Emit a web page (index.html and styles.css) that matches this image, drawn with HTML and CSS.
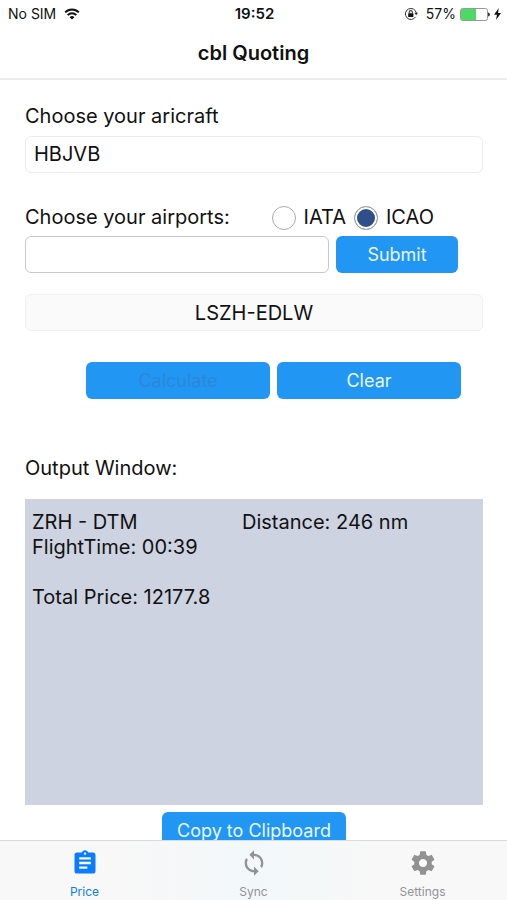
FILE: index.html
```html
<!DOCTYPE html>
<html lang="en">
<head>
<meta charset="utf-8">
<meta name="viewport" content="width=device-width, initial-scale=1">
<title>cbl Quoting</title>
<link rel="stylesheet" href="styles.css">
</head>
<body>
<div class="status">
  <div class="status-left">
    <span>No SIM</span>
    <svg width="16" height="12" viewBox="0 0 16 12" fill="none" stroke="#111" stroke-width="2"><path d="M1.2 4.4a9.6 9.6 0 0 1 13.6 0M3.7 7.1a6 6 0 0 1 8.6 0"/><path d="M8 11.6 5.6 9.2a3.4 3.4 0 0 1 4.8 0z" fill="#111" stroke="none"/></svg>
  </div>
  <time class="status-time">19:52</time>
  <div class="status-right">
    <svg class="lock" width="14" height="14" viewBox="0 0 14 14" fill="none" stroke="#333"><path d="M11.6 9.8A5.5 5.5 0 1 1 12.3 6"/><path d="M10.4 5.8h3.6l-1.8 2.5z" fill="#333" stroke="none"/><path d="M5.2 6.5V5.2a1.6 1.6 0 0 1 3.2 0v1.3" stroke-width="1.1"/><rect x="4.2" y="6.2" width="5.2" height="3.8" rx=".5" fill="#111" stroke="none"/></svg>
    <span>57%</span>
    <svg width="30" height="13" viewBox="0 0 30 13"><rect x=".5" y=".5" width="27" height="12" rx="2" fill="#fff" stroke="#999"/><path d="M2 1h14v11H2a1 1 0 0 1-1-1V2a1 1 0 0 1 1-1z" fill="#4cd964"/><path d="M28 4.5c2.500 .5 2.500 3.500 0 4z" fill="#333"/></svg>
    <svg width="7" height="12" viewBox="0 0 7 12"><path d="M4.800 0 0 6.800h3L2 12l5-7H4z" fill="#111"/></svg>
  </div>
</div>
<header class="header"><h1 class="title">cbl Quoting</h1></header>
<main class="content">
  <label class="label" for="aircraft">Choose your aricraft</label>
  <select class="field aircraft" id="aircraft"><option>HBJVB</option></select>

  <div class="airport-head">
    <label class="label" for="airport">Choose your airports:</label>
    <div class="codes">
      <label class="code"><input class="radio" type="radio" name="code">IATA</label>
      <label class="code"><input class="radio" type="radio" name="code" checked>ICAO</label>
    </div>
  </div>
  <div class="airport-row">
    <input class="field airport" id="airport" type="text">
    <button class="button submit" type="button">Submit</button>
  </div>
  <input class="field route" type="text" value="LSZH-EDLW" aria-label="Route" readonly>

  <div class="actions">
    <button class="button" type="button" disabled>Calculate</button>
    <button class="button" type="button">Clear</button>
  </div>

  <h2 class="label">Output Window:</h2>
  <section class="output">
    <div class="output-row"><span>ZRH - DTM</span><span>Distance: 246 nm</span></div>
    <div>FlightTime: 00:39</div>
    <div class="total">Total Price: 12177.8</div>
  </section>
  <button class="button copy" type="button">Copy to Clipboard</button>
</main>
<nav class="tabs">
  <a class="tab active" href="#price">
    <svg class="icon" viewBox="0 0 24 24"><path d="M19 3h-4.180C14.400 1.840 13.300 1 12 1c-1.300 0-2.400.84-2.820 2H5c-1.100 0-2 .9-2 2v14c0 1.100.9 2 2 2h14c1.100 0 2-.9 2-2V5c0-1.100-.9-2-2-2zm-7 0c.55 0 1 .45 1 1s-.45 1-1 1-1-.45-1-1 .45-1 1-1zm2 14H7v-2h7v2zm3-4H7v-2h10v2zm0-4H7V7h10v2z"/></svg>
    <span>Price</span>
  </a>
  <a class="tab" href="#sync">
    <svg class="icon" viewBox="0 0 24 24"><path d="M12 4V1L8 5l4 4V6c3.310 0 6 2.690 6 6 0 1.010-.25 1.970-.7 2.800l1.460 1.460C19.540 15.030 20 13.570 20 12c0-4.420-3.580-8-8-8zm0 14c-3.310 0-6-2.690-6-6 0-1.010.25-1.970.7-2.800L5.240 7.740C4.460 8.970 4 10.430 4 12c0 4.420 3.580 8 8 8v3l4-4-4-4v3z"/></svg>
    <span>Sync</span>
  </a>
  <a class="tab" href="#settings">
    <svg class="icon" viewBox="0 0 24 24"><path d="M19.430 12.980c.04-.32.07-.64.07-.98s-.03-.66-.07-.98l2.110-1.650c.19-.15.24-.42.12-.64l-2-3.460c-.12-.22-.39-.3-.61-.22l-2.490 1c-.52-.4-1.080-.73-1.690-.98l-.38-2.650C14.460 2.180 14.250 2 14 2h-4c-.25 0-.46.18-.49.42l-.38 2.650c-.61.25-1.170.59-1.690.98l-2.490-1c-.23-.09-.49 0-.61.22l-2 3.460c-.13.22-.07.49.12.64l2.110 1.650c-.04.32-.07.65-.07.98s.03.66.07.98l-2.110 1.650c-.19.15-.24.42-.12.64l2 3.460c.12.22.39.3.61.22l2.490-1c.52.4 1.080.73 1.690.98l.38 2.650c.03.24.24.42.49.42h4c.25 0 .46-.18.49-.42l.38-2.650c.61-.25 1.170-.59 1.690-.98l2.490 1c.23.09.49 0 .61-.22l2-3.460c.12-.22.07-.49-.12-.64l-2.110-1.650zM12 15.500c-1.930 0-3.500-1.570-3.500-3.500s1.570-3.500 3.500-3.500 3.500 1.570 3.500 3.500-1.570 3.500-3.500 3.500z"/></svg>
    <span>Settings</span>
  </a>
</nav>
</body>
</html>
```
FILE: styles.css
```css
* { box-sizing: border-box; }

body {
  margin: 0;
  height: 100vh;
  display: flex;
  flex-direction: column;
  background: #fff;
  color: #111;
  font: 20px/25px Inter, "Liberation Sans", sans-serif;
}

.status {
  display: grid;
  grid-template-columns: 1fr auto 1fr;
  align-items: center;
  height: 28px;
  padding: 0 6px 0 8px;
  font-size: 14px;
  line-height: 20px;
  flex: none;
}
.status-left, .status-right { display: flex; align-items: center; gap: 8px; }
.status-right { justify-content: flex-end; gap: 4px; }
.lock { margin-right: 4px; }
.status-time { font-size: 15px; font-weight: 600; }

.header {
  height: 52px;
  flex: none;
  display: flex;
  align-items: center;
  justify-content: center;
  border-bottom: 2px solid #ededed;
}
.title { margin: 0; font-size: 20px; font-weight: 600; }

.content {
  flex: 1;
  min-height: 0;
  overflow: hidden;
  padding: 24px 24px 0 25px;
}
.label { display: block; margin: 0; font-size: 20px; font-weight: 400; }

.field {
  display: block;
  width: 100%;
  height: 37px;
  margin: 0;
  padding: 0 8px;
  border: 1px solid #ececec;
  border-radius: 6px;
  background: #fff;
  color: #111;
  font: inherit;
  appearance: none;
}
.aircraft { margin-top: 7px; }

.airport-head {
  display: flex;
  align-items: center;
  justify-content: space-between;
  margin: 32px 49px 6px 0;
}
.codes { display: flex; gap: 8px; }
.code { display: flex; align-items: center; gap: 8px; }
.radio {
  width: 24px;
  height: 24px;
  margin: 0;
  border: 1px solid #aaa;
  border-radius: 50%;
  background: #fff;
  appearance: none;
}
.radio:checked { background: #2e4f87; box-shadow: inset 0 0 0 2px #fff; }

.airport-row { display: flex; gap: 7px; padding-right: 25px; }
.airport { flex: 1; min-width: 0; border-color: #c8c8c8; }
.route {
  margin-top: 21px;
  background: #fafafa;
  border-color: #f0f0f0;
  text-align: center;
}

.button {
  flex: 1;
  height: 37px;
  padding: 0;
  border: 0;
  border-radius: 6px;
  background: #2196f3;
  color: #e8f7ff;
  font: 18px/24px Inter, "Liberation Sans", sans-serif;
}
.button:disabled { color: #2b88d9; }
.submit { flex: 0 0 122px; }

.actions {
  display: flex;
  gap: 7px;
  margin: 31px 0 57px;
  padding: 0 22px 0 61px;
}

.output {
  min-height: 306px;
  margin: 18px 0 7px;
  padding: 11px 7px;
  background: #cdd3e1;
}
.output-row { display: grid; grid-template-columns: 210px 1fr; }
.total { margin-top: 25px; }
.copy { display: block; width: 184px; margin: 0 auto; }

.tabs {
  flex: none;
  display: flex;
  height: 60px;
  border-top: 1px solid #d9dcde;
  background: linear-gradient(90deg, #f8f8f8 25%, #f2f8fa 50%, #f8f8f8 75%);
}
.tab {
  flex: 1;
  display: flex;
  flex-direction: column;
  align-items: center;
  gap: 7px;
  padding-top: 8px;
  color: #929292;
  font-size: 12px;
  line-height: 16px;
  text-decoration: none;
}
.active { color: #0a7cff; }
.icon { width: 28px; height: 28px; fill: currentColor; }
```
